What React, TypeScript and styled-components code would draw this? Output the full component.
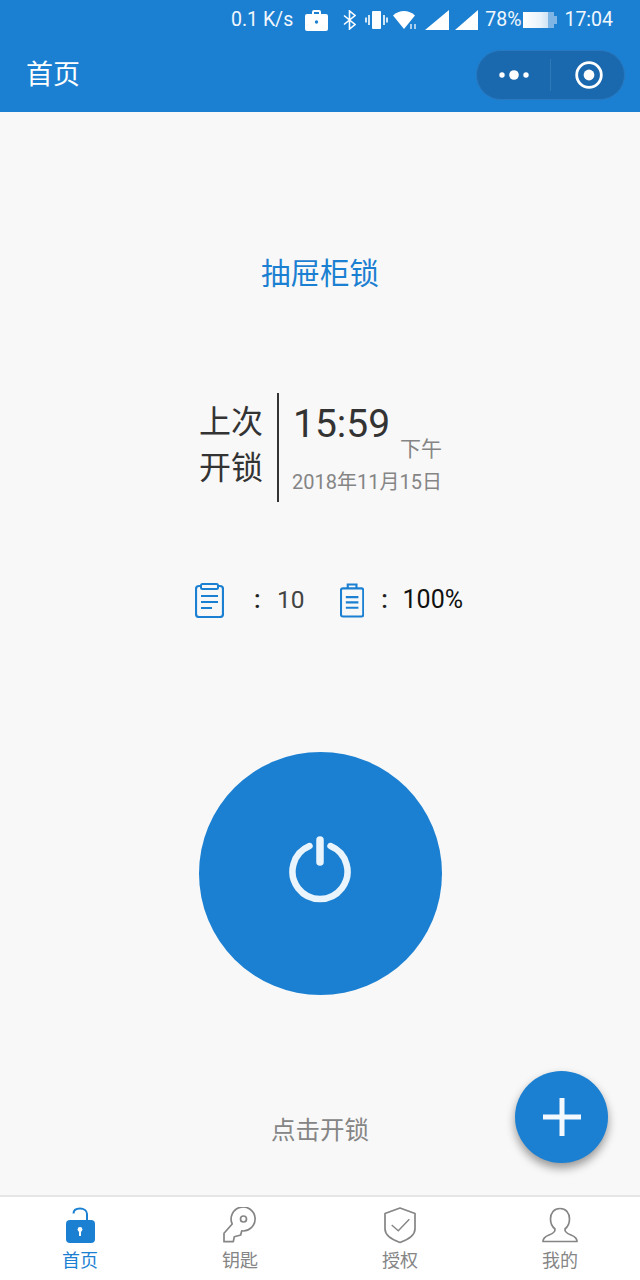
import React from "react";
import styled, { createGlobalStyle } from "styled-components";

const BLUE = "#1b80d2";
const GREY = "#858585";

const GlobalStyle = createGlobalStyle`
	html, body {
		margin: 0;
		padding: 0;
		background: #f8f8f8;
		font-family: Roboto, "Noto Sans CJK SC", sans-serif;
	}
	* {
		box-sizing: border-box;
	}
`;

const Page = styled.div`
	position: relative;
	width: 640px;
	height: 1280px;
	display: flex;
	flex-direction: column;
	overflow: hidden;
	background: #f8f8f8;
`;

const Header = styled.header`
	height: 112px;
	background: ${BLUE};
	color: #fff;
	flex: none;
`;
const StatusBar = styled.div`
	height: 38px;
	padding: 2px 27px 0 0;
	display: flex;
	align-items: center;
	justify-content: flex-end;
`;
const StatusText = styled.span<{ $gap: number }>`
	margin-left: ${(p) => p.$gap}px;
	font-size: 19.5px;
	line-height: 36px;
	color: #f1f7fc;
	white-space: nowrap;
`;
const StatusIcon = styled.svg<{ $gap: number }>`
	margin-left: ${(p) => p.$gap}px;
	display: block;
	flex: none;
`;
const NavBar = styled.div`
	height: 74px;
	padding: 0 15px 0 26px;
	display: flex;
	align-items: center;
	justify-content: space-between;
`;
const NavTitle = styled.h1`
	margin: 0;
	padding-top: 1px;
	font-size: 27px;
	font-weight: 400;
	line-height: 73px;
`;
const Capsule = styled.div`
	width: 149px;
	height: 50px;
	margin-top: -1px;
	display: flex;
	align-items: center;
	background: #1a68ae;
	border: 1px solid #2a78be;
	border-radius: 25px;
`;
const CapsulePart = styled.div`
	flex: 1;
	height: 32px;
	display: flex;
	align-items: center;
	justify-content: center;
	&:first-child {
		flex: none;
		width: 74px;
		border-right: 1px solid #3079b9;
	}
	&:last-child {
		padding-left: 3px;
	}
`;

const Main = styled.main`
	flex: 1;
	display: flex;
	flex-direction: column;
	align-items: center;
`;
const LockName = styled.h2`
	margin: 142px 0 0;
	font-size: 29.5px;
	font-weight: 400;
	line-height: 40px;
	color: ${BLUE};
`;
const LastOpen = styled.section`
	margin-top: 99px;
	height: 109px;
	display: flex;
`;
const LastLabel = styled.div`
	width: 65px;
	padding: 6px 14px 0 0;
	margin-right: 13px;
	border-right: 2px solid #333;
	font-size: 32px;
	line-height: 46px;
	color: #333;
	text-align: right;
	white-space: nowrap;
	box-sizing: content-box;
`;
const LastValue = styled.div`
	width: 150px;
	display: flex;
	flex-direction: column;
`;
const TimeRow = styled.div`
	height: 74px;
	position: relative;
	padding-left: 1px;
	font-size: 39px;
	line-height: 62px;
	color: #333;
`;
const Meridiem = styled.span`
	position: absolute;
	right: 0;
	top: 41px;
	font-size: 21px;
	line-height: 30px;
	color: ${GREY};
`;
const DateText = styled.div`
	font-size: 20px;
	line-height: 30px;
	color: ${GREY};
	white-space: nowrap;
`;
const Stats = styled.section`
	margin-top: 78px;
	height: 40px;
	width: 268px;
	margin-left: 18px;
	display: flex;
	align-items: center;
`;
const Stat = styled.div<{ $width: number }>`
	width: ${(p) => p.$width}px;
	display: flex;
	align-items: center;
`;
const StatColon = styled.span<{ $left: number; $width: number }>`
	margin-left: ${(p) => p.$left}px;
	width: ${(p) => p.$width}px;
	font-size: 25px;
	font-weight: 500;
	line-height: 40px;
	color: #222;
`;
const StatValue = styled.span<{ $dark?: boolean }>`
	font-size: ${(p) => (p.$dark ? 25 : 24.5)}px;
	line-height: 40px;
	color: ${(p) => (p.$dark ? "#111" : "#444")};
`;
const PowerButton = styled.button`
	margin-top: 132px;
	width: 243px;
	height: 243px;
	padding: 0;
	border: none;
	border-radius: 50%;
	background: ${BLUE};
	display: flex;
	align-items: center;
	justify-content: center;
`;
const Caption = styled.p`
	margin: 116px 0 0;
	font-size: 24.5px;
	line-height: 40px;
	color: ${GREY};
`;
const Fab = styled.button`
	position: absolute;
	left: 515px;
	top: 1071px;
	width: 93px;
	height: 92px;
	padding: 0;
	border: none;
	border-radius: 50%;
	background: ${BLUE};
	box-shadow: 0 5px 10px rgba(0, 0, 0, 0.4);
	display: flex;
	align-items: center;
	justify-content: center;
`;

const TabBar = styled.nav`
	height: 85px;
	flex: none;
	display: grid;
	grid-template-columns: repeat(4, 1fr);
	background: #fff;
	border-top: 2px solid #e6e6e6;
`;
const Tab = styled.div<{ $active?: boolean }>`
	padding-top: 10px;
	display: flex;
	flex-direction: column;
	align-items: center;
	font-size: 18px;
	line-height: 26px;
	color: ${(p) => (p.$active ? BLUE : GREY)};
	svg {
		display: block;
		margin-bottom: 4px;
	}
`;

const tabs = [
	{
		label: "首页",
		active: true,
		icon: (
			<>
				<path d="M13.5 6.5C13.5 3 16.2 1.5 20 1.5S27 3.5 27 7V14" fill="none" stroke={BLUE} strokeWidth="2" />
				<rect x="6" y="13" width="29" height="23" rx="4" fill={BLUE} />
				<circle cx="20" cy="22.5" r="2.4" fill="#fff" />
				<rect x="19" y="23" width="2" height="6" fill="#fff" />
			</>
		),
	},
	{
		label: "钥匙",
		icon: (
			<>
				<path d="M12.2 17L4 26.3V34.7H13.3L14.3 29.7L20.7 28L21.7 23.9A12 12 0 1 0 12.2 17Z" fill="none" stroke={GREY} strokeWidth="1.7" strokeLinejoin="round" />
				<circle cx="23.5" cy="12" r="3" fill="none" stroke={GREY} strokeWidth="1.7" />
			</>
		),
	},
	{
		label: "授权",
		icon: (
			<>
				<path d="M20 1L35 6.5V22C35 29 27 33 20 35.5C13 33 5 29 5 22V6.5Z" fill="none" stroke={GREY} strokeWidth="1.7" strokeLinejoin="round" />
				<path d="M11.7 18L18.3 23.7L29.3 12.3" fill="none" stroke={GREY} strokeWidth="1.4" />
			</>
		),
	},
	{
		label: "我的",
		icon: (
			<path
				d="M20 1.5C14 1.5 10.5 6 10.5 12C10.5 17 12.5 20 15 22C15.5 25 13 26.5 9 28C5 29.5 3 31 3 34.5H37C37 31 35 29.5 31 28C27 26.5 24.5 25 25 22C27.5 20 29.5 17 29.5 12C29.5 6 26 1.5 20 1.5Z"
				fill="none"
				stroke={GREY}
				strokeWidth="1.7"
				strokeLinejoin="round"
			/>
		),
	},
];

const App = () => {
	return (
		<Page>
			<GlobalStyle />
			<Header>
				<StatusBar>
					<StatusText $gap={0}>0.1 K/s</StatusText>
					<StatusIcon $gap={12} width="23" height="22" viewBox="0 0 23 22">
						<path d="M7 5V3a2 2 0 0 1 2-2h5a2 2 0 0 1 2 2v2h5a2 2 0 0 1 2 2v13a2 2 0 0 1-2 2H2a2 2 0 0 1-2-2V7a2 2 0 0 1 2-2ZM9 3v2h5V3Z" fill="#fff" fillRule="evenodd" />
						<circle cx="11.5" cy="13" r="1.7" fill={BLUE} />
					</StatusIcon>
					<StatusIcon $gap={15} width="13" height="20" viewBox="0 0 13 20">
						<path d="M1 5.5L12 14.5L6.5 19V1L12 5.5L1 14.5" fill="none" stroke="#fff" strokeWidth="1.6" />
					</StatusIcon>
					<StatusIcon $gap={9} width="23" height="18" viewBox="0 0 23 18">
						<rect x="7" y="0" width="9" height="18" rx="1" fill="#fff" />
						<path d="M4 4V14M1 6.5V11.5M19 4V14M22 6.5V11.5" stroke="#fff" strokeWidth="1.6" />
					</StatusIcon>
					<StatusIcon $gap={5} width="24" height="19" viewBox="0 0 24 19">
						<path d="M0 4.5C3 1.5 7 0 11 0S19 1.5 22 4.5L11 18Z" fill="#fff" />
						<path d="M18 13V18M22 13V18" stroke="#cfe3f5" strokeWidth="1.6" />
					</StatusIcon>
					<StatusIcon $gap={8} width="24" height="20" viewBox="0 0 24 20">
						<path d="M0 20L24 0V20Z" fill="#fff" />
					</StatusIcon>
					<StatusIcon $gap={6} width="23" height="20" viewBox="0 0 23 20">
						<path d="M0 20L23 0V20Z" fill="#fff" />
					</StatusIcon>
					<StatusText $gap={7}>78%</StatusText>
					<StatusIcon $gap={2} width="34" height="16" viewBox="0 0 34 16">
						<defs>
							<linearGradient id="batteryFill" x1="0" x2="1" y1="0" y2="0">
								<stop offset="0" stopColor="#fff" />
								<stop offset="0.55" stopColor="#eaf3fb" />
								<stop offset="0.82" stopColor="#cfe2f4" />
								<stop offset="0.82" stopColor="#7fb5e4" />
								<stop offset="1" stopColor="#7fb5e4" />
							</linearGradient>
						</defs>
						<rect x="0" y="0" width="31" height="16" fill="url(#batteryFill)" />
						<rect x="31" y="4" width="3" height="8" fill="#7fb5e4" />
					</StatusIcon>
					<StatusText $gap={7}>17:04</StatusText>
				</StatusBar>
				<NavBar>
					<NavTitle>首页</NavTitle>
					<Capsule>
						<CapsulePart>
							<svg width="30" height="10" viewBox="0 0 30 10">
								<circle cx="3" cy="5" r="2.7" fill="#fff" />
								<circle cx="15" cy="5" r="4.8" fill="#fff" />
								<circle cx="27" cy="5" r="2.7" fill="#fff" />
							</svg>
						</CapsulePart>
						<CapsulePart>
							<svg width="30" height="30" viewBox="0 0 30 30">
								<circle cx="15" cy="15" r="12.3" fill="none" stroke="#fff" strokeWidth="2.8" />
								<circle cx="15" cy="15" r="5.4" fill="#fff" />
							</svg>
						</CapsulePart>
					</Capsule>
				</NavBar>
			</Header>
			<Main>
				<LockName>抽屉柜锁</LockName>
				<LastOpen>
					<LastLabel>
						上次
						<br />
						开锁
					</LastLabel>
					<LastValue>
						<TimeRow>
							15:59
							<Meridiem>下午</Meridiem>
						</TimeRow>
						<DateText>2018年11月15日</DateText>
					</LastValue>
				</LastOpen>
				<Stats>
					<Stat $width={145}>
						<svg width="29" height="35" viewBox="0 0 29 35">
							<rect x="1" y="3" width="27" height="31" rx="3" fill="none" stroke={BLUE} strokeWidth="2.2" />
							<rect x="6" y="1" width="17" height="5" rx="1.5" fill="#f8f8f8" stroke={BLUE} strokeWidth="2" />
							<path d="M6 13H23M6 19H23M6 25H17" stroke={BLUE} strokeWidth="2.2" />
						</svg>
						<StatColon $left={30} $width={23}>:</StatColon>
						<StatValue>10</StatValue>
					</Stat>
					<Stat $width={123}>
						<svg width="25" height="35" viewBox="0 0 25 35">
							<path d="M8 5V1H17V5" fill="none" stroke={BLUE} strokeWidth="2.2" />
							<rect x="1" y="5" width="23" height="29" rx="2" fill="none" stroke={BLUE} strokeWidth="2.2" />
							<path d="M6 14H19M6 19.5H19M6 25H19" stroke={BLUE} strokeWidth="2.2" />
						</svg>
						<StatColon $left={17} $width={22}>:</StatColon>
						<StatValue $dark>100%</StatValue>
					</Stat>
				</Stats>
				<PowerButton aria-label="开锁">
					<svg width="62" height="75" viewBox="0 0 62 75">
						<path d="M20.5 10A27.5 27.5 0 1 0 41.5 10" fill="none" stroke="#eaf4fc" strokeWidth="6.5" strokeLinecap="round" />
						<path d="M31 4V26" fill="none" stroke="#eaf4fc" strokeWidth="7.5" strokeLinecap="round" />
					</svg>
				</PowerButton>
				<Caption>点击开锁</Caption>
			</Main>
			<Fab aria-label="添加">
				<svg width="38" height="38" viewBox="0 0 38 38">
					<path d="M0 19H38M19 0V38" stroke="#f4f9fd" strokeWidth="5" />
				</svg>
			</Fab>
			<TabBar>
				{tabs.map((tab) => (
					<Tab key={tab.label} $active={tab.active}>
						<svg width="40" height="37" viewBox="0 0 40 37">
							{tab.icon}
						</svg>
						{tab.label}
					</Tab>
				))}
			</TabBar>
		</Page>
	);
};

export default App;
